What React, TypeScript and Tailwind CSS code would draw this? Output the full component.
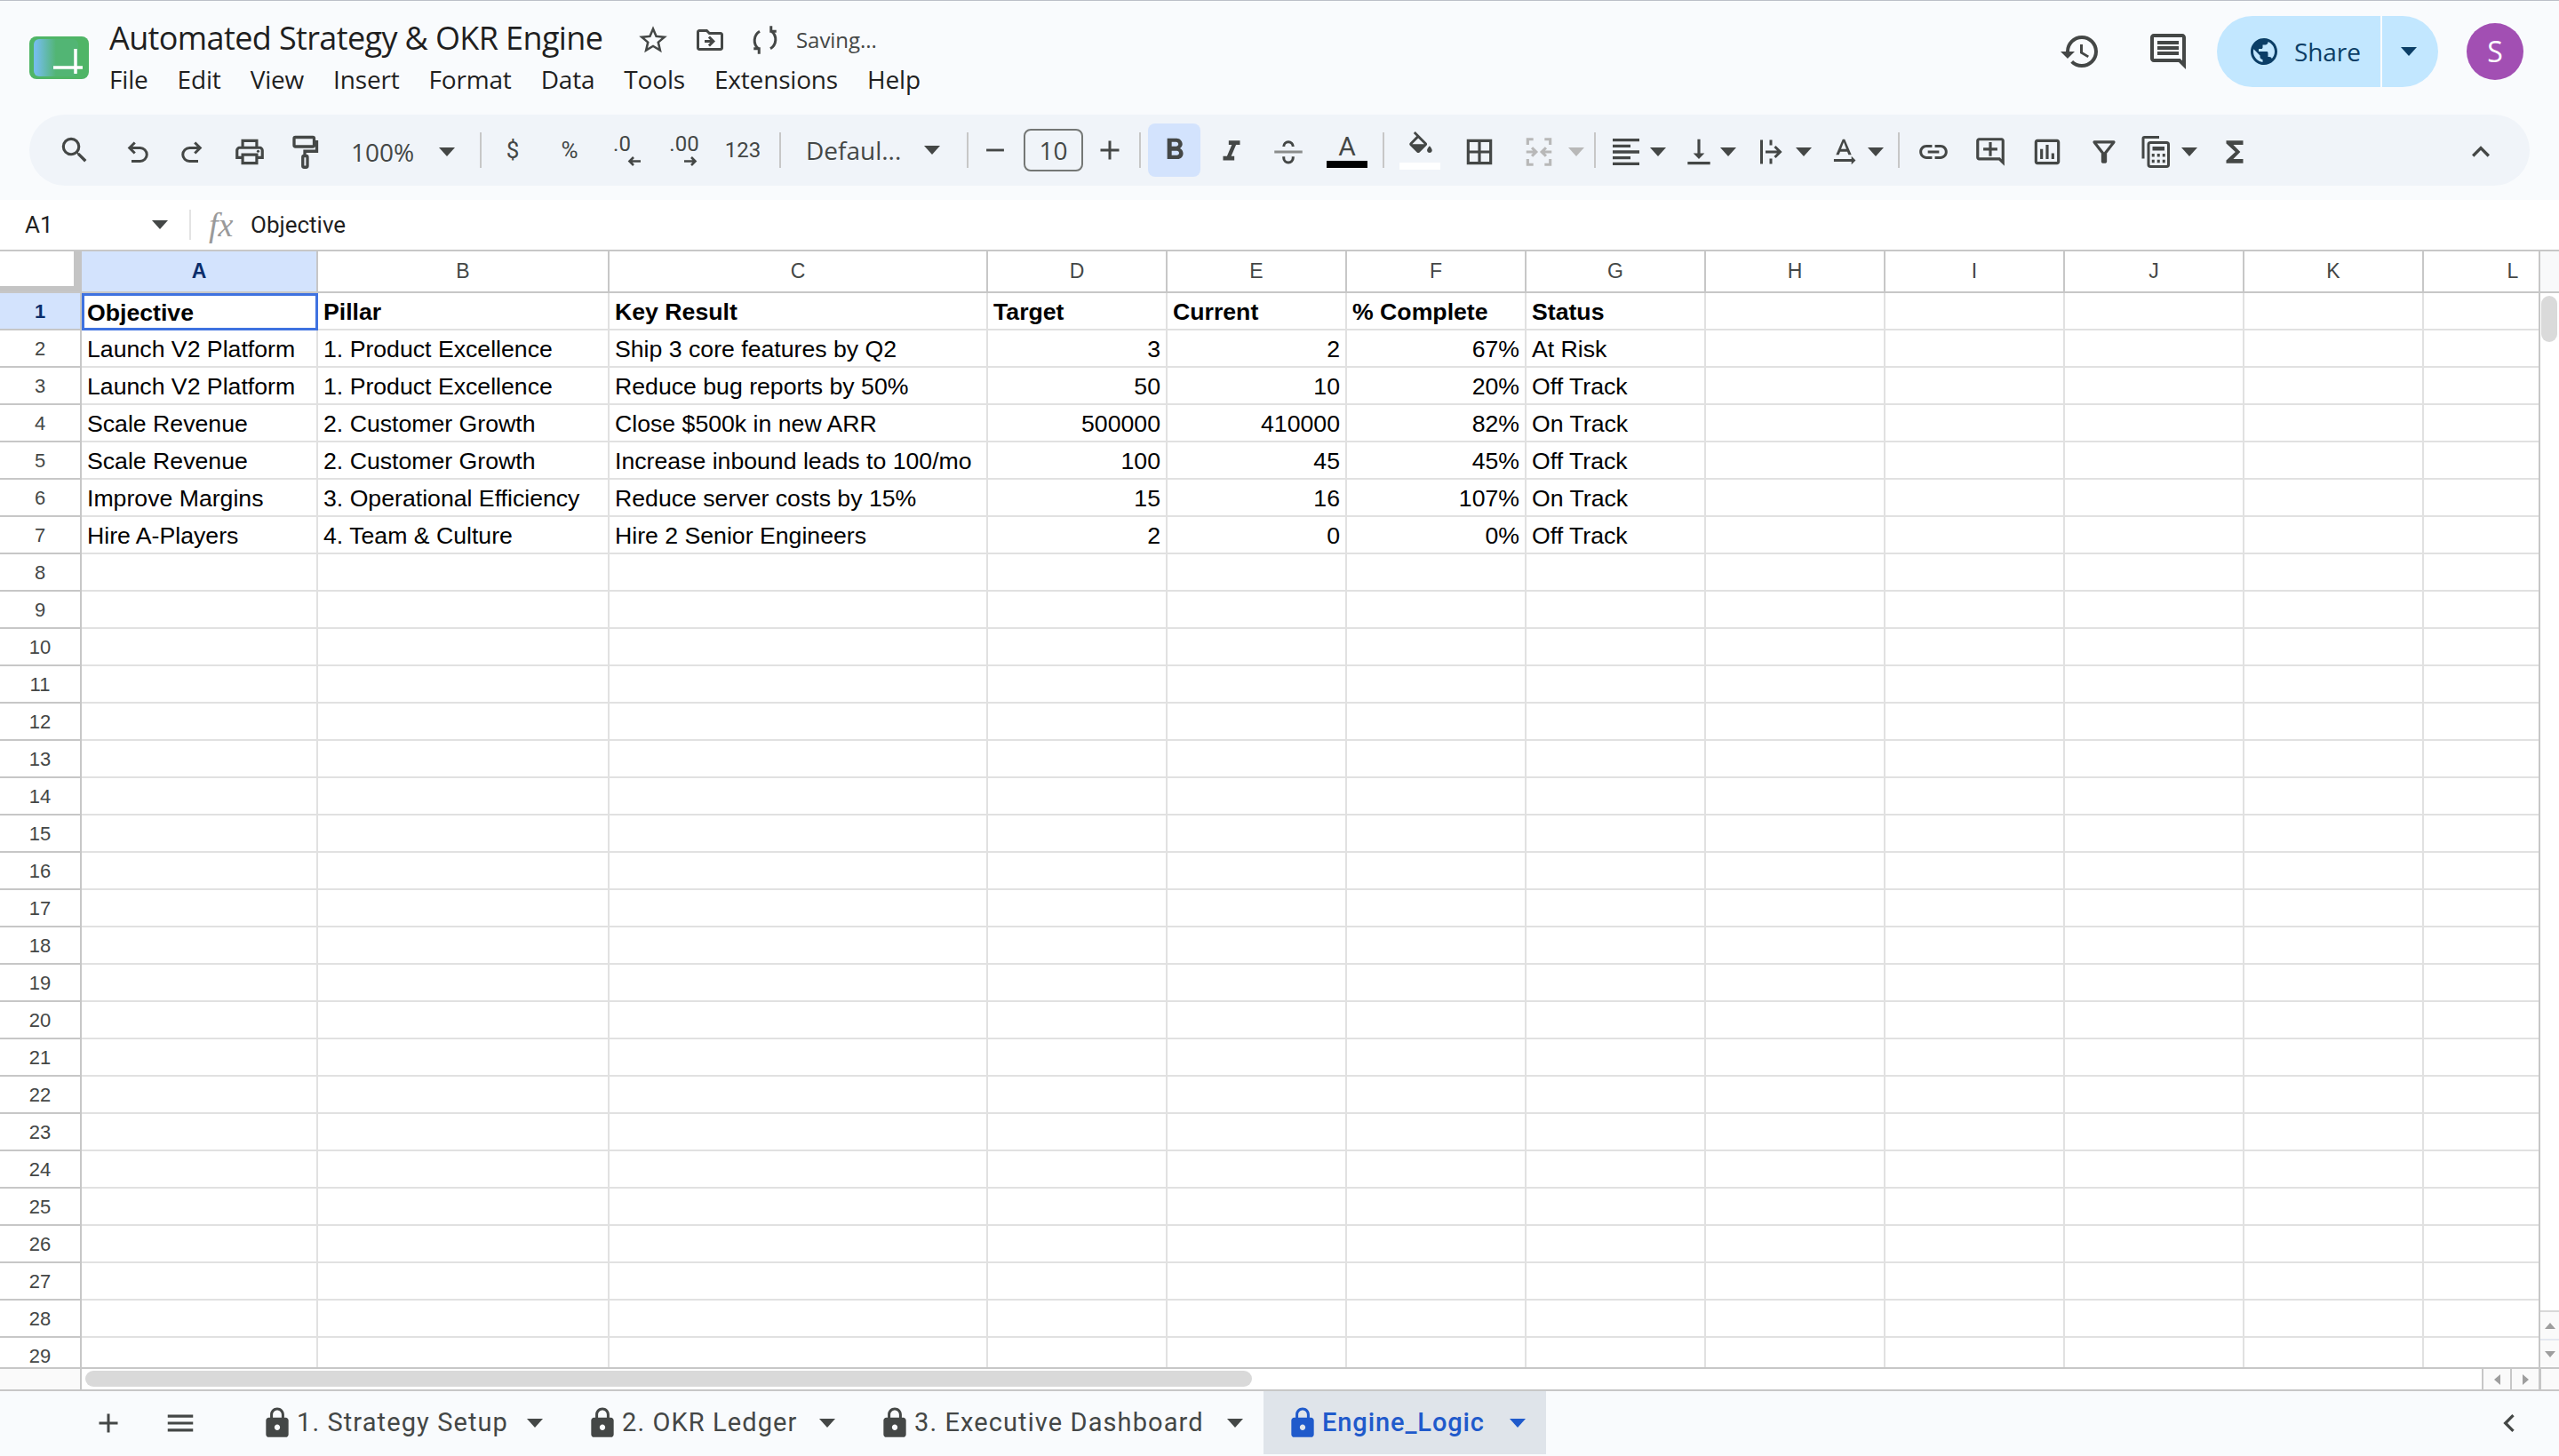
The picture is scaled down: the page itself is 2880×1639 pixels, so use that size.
import type { ReactNode } from "react";
import {
  MdAdd,
  MdBorderAll,
  MdChevronLeft,
  MdExpandLess,
  MdFormatAlignLeft,
  MdFormatBold,
  MdFormatItalic,
  MdFunctions,
  MdHistory,
  MdLink,
  MdLock,
  MdMenu,
  MdOutlineAddComment,
  MdOutlineComment,
  MdOutlineDriveFileMove,
  MdOutlineFilterAlt,
  MdOutlineInsertChart,
  MdOutlinePrint,
  MdPublic,
  MdRemove,
  MdSearch,
  MdStarBorder,
  MdTextRotationNone,
  MdVerticalAlignBottom,
} from "react-icons/md";

const gray = "#444746";

function Caret({ color = gray, className = "" }: { color?: string; className?: string }) {
  return (
    <svg width="18" height="10" viewBox="0 0 18 10" className={className}>
      <path d="M0 0h18L9 10z" fill={color} />
    </svg>
  );
}

function Tool({ className, children }: { className: string; children: ReactNode }) {
  return <div className={`flex h-[60px] shrink-0 items-center justify-center text-[#444746] ${className}`}>{children}</div>;
}

function Sep({ className }: { className: string }) {
  return <div className={`h-[40px] w-[2px] shrink-0 bg-[#c7c7c7] ${className}`} />;
}

function Undo({ flip = false }: { flip?: boolean }) {
  return (
    <svg width="36" height="36" viewBox="0 0 24 24" fill="none" stroke={gray} strokeWidth="2" className={flip ? "mt-1 -scale-x-100" : "mt-1"}>
      <path d="M7 9h7.5a4.5 4.5 0 0 1 0 10H8" />
      <path d="M10.5 5 6.5 9l4 4" />
    </svg>
  );
}

function Decimal({ label, flip = false }: { label: string; flip?: boolean }) {
  return (
    <div className="flex w-[46px] flex-col items-center">
      <span className={`h-[22px] font-['Roboto',sans-serif] text-[24px] leading-[22px] ${flip ? "" : "-ml-[10px]"}`}>{label}</span>
      <svg width="16" height="11" viewBox="0 0 16 11" fill="none" stroke={gray} strokeWidth="2.6" className={flip ? "ml-[14px] mt-[3px] -scale-x-100" : "ml-[18px] mt-[3px]"}>
        <path d="M15 5.500H2M7 1 2.500 5.500 7 10" />
      </svg>
    </div>
  );
}

function Toolbar() {
  return (
    <div className="mx-[33px] flex h-[80px] w-[2814px] items-center rounded-[40px] bg-[#f0f4f9] pl-[19px]">
      <Tool className="w-[64px]"><MdSearch size={38} /></Tool>
      <Tool className="ml-[6px] w-[64px]"><Undo /></Tool>
      <Tool className="w-[62px]"><Undo flip /></Tool>
      <Tool className="ml-[1px] w-[64px]"><MdOutlinePrint size={38} className="mt-1" /></Tool>
      <Tool className="w-[60px]">
        <svg width="36" height="40" viewBox="0 0 24 26" fill="none" stroke={gray} strokeWidth="2.2" className="mt-1">
          <rect x="4" y="2" width="15" height="7" rx="1" />
          <path d="M19 5.500h2v7H12v3" />
          <rect x="10.500" y="16" width="3.500" height="8.500" rx="1" />
        </svg>
      </Tool>
      <Tool className="ml-[22px] w-[73px] justify-start text-[28px]"><span className="mt-1 font-['Open_Sans',sans-serif]">100%</span></Tool>
      <Tool className="ml-[23px] w-[24px]"><Caret className="mt-1" /></Tool>
      <Sep className="ml-[25px]" />
      <Tool className="ml-[3px] w-[64px] font-['Roboto',sans-serif] text-[26px]">$</Tool>
      <Tool className="w-[64px] font-['Roboto',sans-serif] text-[26px]">%</Tool>
      <Tool className="w-[64px]"><Decimal label=".0" /></Tool>
      <Tool className="ml-[1px] w-[64px]"><Decimal label=".00" flip /></Tool>
      <Tool className="ml-[2px] w-[64px] font-['Roboto',sans-serif] text-[24px]">123</Tool>
      <Sep className="ml-[9px]" />
      <Tool className="ml-[28px] w-[107px] justify-start text-[28px]"><span className="font-['Open_Sans',sans-serif]">Defaul...</span></Tool>
      <Tool className="ml-[23px] w-[24px]"><Caret /></Tool>
      <Sep className="ml-[27px]" />
      <Tool className="ml-[4px] w-[52px]"><MdRemove size={34} /></Tool>
      <div className="ml-[6px] flex h-[48px] w-[67px] shrink-0 items-center justify-center rounded-[8px] border-2 border-[#747775] font-['Open_Sans',sans-serif] text-[28px] text-[#444746]">10</div>
      <Tool className="ml-[4px] w-[52px]"><MdAdd size={36} /></Tool>
      <Sep className="ml-[7px]" />
      <Tool className="ml-[8px] w-[59px] rounded-[8px] bg-[#d3e3fd] text-[#041e49]"><MdFormatBold size={40} /></Tool>
      <Tool className="ml-[3px] w-[64px]"><MdFormatItalic size={38} className="mt-1" /></Tool>
      <Tool className="w-[64px]">
        <svg width="36" height="36" viewBox="0 0 24 24" fill="none" stroke={gray} strokeWidth="2" className="mt-1">
          <path d="M8.500 8a3.500 3.500 0 0 1 7 0" />
          <path d="M1.500 12h21" stroke="#8a8c8b" />
          <path d="M8.500 15.500v1a3.500 3.500 0 0 0 7 0v-1" />
        </svg>
      </Tool>
      <Tool className="ml-[2px] w-[64px]">
        <div className="flex flex-col items-center">
          <span className="font-['Roboto',sans-serif] text-[30px] leading-[30px]">A</span>
          <div className="mt-[1px] h-[8px] w-[46px] bg-black" />
        </div>
      </Tool>
      <Sep className="ml-[8px]" />
      <Tool className="ml-[8px] w-[64px]">
        <div className="flex flex-col items-center">
          <svg width="34" height="34" viewBox="0 0 24 24" fill={gray} className="ml-[2px]">
            <path d="M16.560 8.940 7.620 0 6.210 1.410l2.380 2.380-5.150 5.150c-.59.59-.59 1.540 0 2.120l5.500 5.500c.29.29.68.44 1.060.44s.77-.15 1.060-.44l5.500-5.500c.59-.58.59-1.530 0-2.120zM5.210 10 10 5.210 14.790 10H5.210zM19 11.500s-2 2.170-2 3.500c0 1.100.9 2 2 2s2-.9 2-2c0-1.330-2-3.500-2-3.500z" />
          </svg>
          <div className="mt-[1px] h-[8px] w-[46px] bg-white" />
        </div>
      </Tool>
      <Tool className="ml-[3px] w-[64px]"><MdBorderAll size={38} className="mt-1" /></Tool>
      <Tool className="ml-[3px] w-[64px]">
        <svg width="38" height="38" viewBox="0 0 24 24" fill="none" stroke="#b8b8b8" strokeWidth="2" className="mt-1">
          <path d="M8 3H4v4M16 3h4v4M8 21H4v-4M16 21h4v-4M3 12h7M7 9l3 3-3 3M21 12h-7M17 9l-3 3 3 3" />
        </svg>
      </Tool>
      <Tool className="w-[20px]"><Caret color="#b8b8b8" className="mt-1" /></Tool>
      <Sep className="ml-[10px]" />
      <Tool className="ml-[8px] w-[52px]"><MdFormatAlignLeft size={40} className="mt-1" /></Tool>
      <Tool className="w-[20px]"><Caret className="mt-1" /></Tool>
      <Tool className="ml-[13px] w-[46px]"><MdVerticalAlignBottom size={38} className="mt-1" /></Tool>
      <Tool className="w-[20px]"><Caret className="mt-1" /></Tool>
      <Tool className="ml-[15px] w-[46px]">
        <svg width="36" height="36" viewBox="0 0 24 24" fill="none" stroke={gray} strokeWidth="2" className="mt-1">
          <path d="M5 3v18M12 3v4M12 17v4M8 12h11M15 8l4 4-4 4" />
        </svg>
      </Tool>
      <Tool className="ml-[4px] w-[20px]"><Caret className="mt-1" /></Tool>
      <Tool className="ml-[12px] w-[46px]"><MdTextRotationNone size={38} className="mt-1" /></Tool>
      <Tool className="ml-[3px] w-[20px]"><Caret className="mt-1" /></Tool>
      <Sep className="ml-[15px]" />
      <Tool className="ml-[6px] w-[64px]"><MdLink size={38} className="mt-1" /></Tool>
      <Tool className="w-[64px]"><MdOutlineAddComment size={38} className="mt-1" /></Tool>
      <Tool className="w-[64px]"><MdOutlineInsertChart size={38} className="mt-1" /></Tool>
      <Tool className="w-[64px]"><MdOutlineFilterAlt size={38} className="mt-1" /></Tool>
      <Tool className="ml-[4px] w-[46px]">
        <svg width="36" height="40" viewBox="0 0 24 26" fill="none" stroke={gray} strokeWidth="2" className="mt-1">
          <path d="M2 18V3a1 1 0 0 1 1-1h11" />
          <rect x="6" y="6" width="15" height="18" rx="1.500" />
          <path d="M9 10.500h9" strokeWidth="3" />
          <path d="M8.500 15.500h2M12.500 15.500h2M16.500 15.500h2M8.500 20h2M12.500 20h2M16.500 20h2" strokeWidth="2.400" />
        </svg>
      </Tool>
      <Tool className="ml-[4px] w-[20px]"><Caret className="mt-1" /></Tool>
      <Tool className="ml-[9px] w-[64px]"><MdFunctions size={38} className="mt-1" /></Tool>
      <Tool className="ml-auto mr-[23px] w-[64px]"><MdExpandLess size={40} className="mt-1" /></Tool>
    </div>
  );
}

function Header() {
  return (
    <div className="flex h-[128px] shrink-0 items-start pl-[33px]">
      <svg width="67" height="48" viewBox="0 0 67 48" className="mt-[40px] shrink-0">
        <defs>
          <linearGradient id="logo-fill" x1="0" x2="1" y1="0" y2="0">
            <stop offset="0.05" stopColor="#74bdea" />
            <stop offset="0.5" stopColor="#52b574" />
          </linearGradient>
        </defs>
        <rect x="0" y="0" width="67" height="48" rx="8" fill="#4fb566" />
        <rect x="5" y="3" width="50" height="42" rx="6" fill="url(#logo-fill)" />
        <path d="M27 35h33M52 14v28" stroke="#fff" strokeWidth="3.500" fill="none" />
      </svg>
      <div className="ml-[23px] flex flex-col font-['Open_Sans',sans-serif]">
        <div className="mt-[22px] flex h-[44px] items-center text-[#1f1f1f]">
          <span className="w-[593px] -translate-y-[2px] text-[36px] leading-[44px] tracking-[-0.62px]">Automated Strategy &amp; OKR Engine</span>
          <MdStarBorder size={38} className="text-[#444746]" />
          <MdOutlineDriveFileMove size={36} className="ml-[27px] text-[#444746]" />
          <svg width="36" height="36" viewBox="0 0 24 24" fill="none" stroke={gray} strokeWidth="2" className="ml-[26px]">
            <path d="M8 5.500a8 8 0 0 0-1 13" />
            <path d="M3.500 18.500H7.500V22.500" />
            <path d="M16 18.500a8 8 0 0 0 1-13" />
            <path d="M20.500 5.500H16.500V1.500" />
          </svg>
          <span className="ml-[17px] text-[24px] leading-[30px] tracking-[-0.05px] text-[#444746]">Saving...</span>
        </div>
        <div className="mt-[3px] flex items-center gap-[33px] text-[28px] leading-[38px] tracking-[-0.18px] text-[#1f1f1f]">
          {["File", "Edit", "View", "Insert", "Format", "Data", "Tools", "Extensions", "Help"].map((m) => (
            <span key={m}>{m}</span>
          ))}
        </div>
      </div>
      <div className="ml-auto mt-[17px] flex items-center">
        <MdHistory size={48} className="text-[#444746]" />
        <MdOutlineComment size={48} className="ml-[51px] text-[#444746]" />
        <div className="ml-[31px] flex h-[80px] w-[249px] items-center rounded-[40px] bg-[#c2e7ff] text-[#0b3e66]">
          <MdPublic size={36} className="ml-[35px]" />
          <span className="ml-[16px] w-[79px] font-['Open_Sans',sans-serif] text-[28px] font-medium tracking-[-0.1px]">Share</span>
          <div className="ml-[18px] h-[80px] w-[2px] bg-[#f9fbfd]" />
          <Caret color="#0b3e66" className="ml-[21px]" />
        </div>
        <div className="ml-[32px] mr-[40px] flex h-[64px] w-[64px] items-center justify-center rounded-full bg-[#a24fb3] font-['Open_Sans',sans-serif] text-[32px] text-white">S</div>
      </div>
    </div>
  );
}

function FormulaBar() {
  return (
    <div className="flex h-[56px] shrink-0 items-center bg-white font-['Roboto',sans-serif] text-[26px] text-[#1f1f1f]">
      <span className="ml-[28px] w-[143px]">A1</span>
      <Caret />
      <div className="ml-[24px] h-[34px] w-[2px] bg-[#e3e3e3]" />
      <span className="ml-[20px] w-[34px] font-['Liberation_Serif',serif] text-[38px] italic leading-none text-[#9a9a9a]">fx</span>
      <span className="ml-[13px]">Objective</span>
    </div>
  );
}

const columns = [
  { label: "A", width: "w-[266px]" },
  { label: "B", width: "w-[328px]" },
  { label: "C", width: "w-[426px]" },
  { label: "D", width: "w-[202px]" },
  { label: "E", width: "w-[202px]" },
  { label: "F", width: "w-[202px]" },
  { label: "G", width: "w-[202px]" },
  { label: "H", width: "w-[202px]" },
  { label: "I", width: "w-[202px]" },
  { label: "J", width: "w-[202px]" },
  { label: "K", width: "w-[202px]" },
  { label: "L", width: "w-[202px]" },
];

const sheet = [
  ["Objective", "Pillar", "Key Result", "Target", "Current", "% Complete", "Status"],
  ["Launch V2 Platform", "1. Product Excellence", "Ship 3 core features by Q2", "3", "2", "67%", "At Risk"],
  ["Launch V2 Platform", "1. Product Excellence", "Reduce bug reports by 50%", "50", "10", "20%", "Off Track"],
  ["Scale Revenue", "2. Customer Growth", "Close $500k in new ARR", "500000", "410000", "82%", "On Track"],
  ["Scale Revenue", "2. Customer Growth", "Increase inbound leads to 100/mo", "100", "45", "45%", "Off Track"],
  ["Improve Margins", "3. Operational Efficiency", "Reduce server costs by 15%", "15", "16", "107%", "On Track"],
  ["Hire A-Players", "4. Team & Culture", "Hire 2 Senior Engineers", "2", "0", "0%", "Off Track"],
];

const rowNumbers = Array.from({ length: 29 }, (_, i) => i + 1);

function Grid() {
  return (
    <div className="flex h-[1258px] shrink-0 border-t-2 border-[#c7c7c7] bg-white font-['Liberation_Sans',sans-serif]">
      <div className="w-[2857px] shrink-0 overflow-hidden">
        <div className="flex h-[47px] w-max border-b-2 border-[#c7c7c7]">
          <div className="flex h-[45px] w-[92px] shrink-0 flex-col">
            <div className="flex h-[39px]">
              <div className="w-[83px] bg-white" />
              <div className="w-[9px] bg-[#c4c4c4]" />
            </div>
            <div className="h-[6px] bg-[#c4c4c4]" />
          </div>
          {columns.map((c, i) => (
            <div
              key={c.label}
              className={`flex shrink-0 items-center justify-center border-r-2 border-[#c7c7c7] text-[23px] ${c.width} ${
                i === 0 ? "bg-[#d3e3fd] font-bold text-[#0b2e6b]" : "text-[#444746]"
              }`}
            >
              {c.label}
            </div>
          ))}
        </div>
        {rowNumbers.map((n) => {
          const data = sheet[n - 1];
          return (
            <div key={n} className="flex h-[42px] w-max">
              <div
                className={`flex w-[92px] shrink-0 items-center justify-center border-r-2 border-b-2 border-[#c7c7c7] text-[22px] ${
                  n === 1 ? "bg-[#d3e3fd] font-bold text-[#0b2e6b]" : "text-[#444746]"
                }`}
              >
                {n}
              </div>
              {columns.map((c, i) => {
                const value = data?.[i];
                const numeric = n > 1 && i >= 3 && i <= 5;
                const selected = n === 1 && i === 0;
                return (
                  <div
                    key={c.label}
                    className={`flex shrink-0 items-center whitespace-nowrap pt-[2px] text-[26.67px] text-black ${c.width} ${
                      selected ? "border-[3px] border-[#3f72e0] pl-[3px]" : "border-r-2 border-b-2 border-[#e1e1e1] pl-[6px] pr-[6px]"
                    } ${numeric ? "justify-end" : ""} ${n === 1 ? "font-bold" : ""}`}
                  >
                    {value}
                  </div>
                );
              })}
            </div>
          );
        })}
      </div>
      <div className="flex w-[23px] shrink-0 flex-col border-l-2 border-[#c7c7c7] bg-white">
        <div className="h-[47px] shrink-0 border-b-2 border-[#c7c7c7] bg-[#f8f9fa]" />
        <div className="ml-[1px] mt-[3px] h-[52px] w-[18px] rounded-[9px] bg-[#dadada]" />
        <div className="mt-auto flex h-[32px] items-center justify-center border-t-2 border-[#d8d8d8] bg-[#fafafa]">
          <svg width="12" height="7" viewBox="0 0 12 7"><path d="M6 0l6 7H0z" fill="#9e9e9e" /></svg>
        </div>
        <div className="flex h-[32px] items-center justify-center border-t-2 border-[#e4e8f0] bg-[#fafafa]">
          <svg width="12" height="7" viewBox="0 0 12 7"><path d="M0 0h12L6 7z" fill="#9e9e9e" /></svg>
        </div>
      </div>
    </div>
  );
}

function HorizontalScroll() {
  return (
    <div className="flex h-[25px] shrink-0 border-t-2 border-[#c7c7c7] bg-white">
      <div className="h-full w-[92px] border-r-2 border-[#c7c7c7] bg-[#fafafa]" />
      <div className="flex-1">
        <div className="ml-[4px] mt-[2px] h-[18px] w-[1313px] rounded-[9px] bg-[#d9d9d9]" />
      </div>
      <div className="flex h-full w-[32px] items-center justify-center border-l-2 border-[#c7c7c7] bg-[#fafafa]">
        <svg width="7" height="12" viewBox="0 0 7 12"><path d="M7 0v12L0 6z" fill="#9e9e9e" /></svg>
      </div>
      <div className="flex h-full w-[32px] items-center justify-center border-l-2 border-[#c7c7c7] bg-[#fafafa]">
        <svg width="7" height="12" viewBox="0 0 7 12"><path d="M0 0v12l7-6z" fill="#9e9e9e" /></svg>
      </div>
      <div className="h-full w-[23px] border-l-[3px] border-[#c7c7c7] bg-[#fafafa]" />
    </div>
  );
}

const tabs = [
  { label: "1. Strategy Setup", width: "w-[259px]" },
  { label: "2. OKR Ledger", width: "w-[222px]" },
  { label: "3. Executive Dashboard", width: "w-[352px]" },
];

function TabBar() {
  return (
    <div className="flex h-[73px] shrink-0 items-stretch border-t-2 border-[#c7c7c7] pl-[90px] font-['Roboto',sans-serif] text-[29px] tracking-[1.1px] text-[#444746]">
      <div className="flex w-[64px] items-center justify-center"><MdAdd size={36} /></div>
      <div className="ml-[17px] flex w-[64px] items-center justify-center"><MdMenu size={38} /></div>
      <div className="ml-[33px] flex items-stretch">
        {tabs.map((t) => (
          <div key={t.label} className="flex items-center pl-[28px] pr-[23px]">
            <MdLock size={38} className="-mx-[3px]" />
            <span className={`ml-[6px] ${t.width}`}>{t.label}</span>
            <Caret />
          </div>
        ))}
        <div className="flex items-center bg-[#dfe4ea] pl-[28px] pr-[23px] text-[#1f5acb]">
          <MdLock size={38} className="-mx-[3px]" />
          <span className="ml-[6px] w-[211px] font-medium tracking-[0.9px]">Engine_Logic</span>
          <Caret color="#1f5acb" />
        </div>
      </div>
      <div className="ml-auto mr-[36px] flex items-center"><MdChevronLeft size={40} /></div>
    </div>
  );
}

export default function App() {
  return (
    <div className="flex h-[1639px] w-[2880px] flex-col overflow-hidden border-t border-[#bcc0c8] bg-[#f9fbfd]">
      <Header />
      <Toolbar />
      <div className="h-[16px] shrink-0" />
      <FormulaBar />
      <Grid />
      <HorizontalScroll />
      <TabBar />
    </div>
  );
}
